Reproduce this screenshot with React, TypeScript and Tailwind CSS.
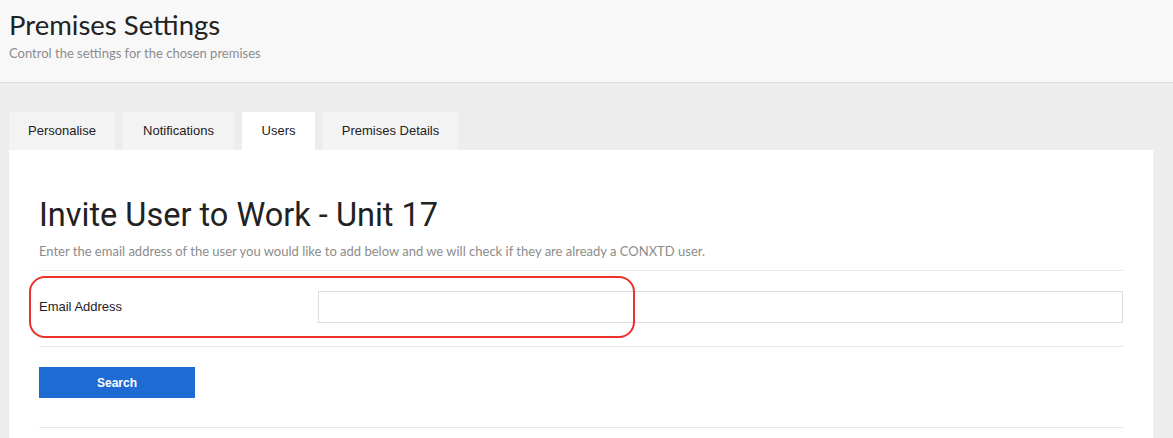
const TABS = [
  { label: 'Personalise', width: 'w-[106px]' },
  { label: 'Notifications', width: 'w-[111px]' },
  { label: 'Users', width: 'w-[73px]' },
  { label: 'Premises Details', width: 'w-[135px]' },
];

export default function App() {
  const active = 'Users';

  return (
    <div className="h-[438px] overflow-hidden bg-[#ededed] font-['Liberation_Sans',sans-serif]">
      {/* Page header */}
      <header className="h-[83px] bg-[#f8f8f8] border-b border-[#dcdcdc] px-[9px] pt-[7px]">
        <h1 className="font-['Lato',sans-serif] text-[27.5px] leading-[35px] text-[#222]">Premises Settings</h1>
        <p className="mt-[2px] font-['Lato',sans-serif] text-[13px] text-[#8c8c8c]">Control the settings for the chosen premises</p>
      </header>

      <div className="pl-[9px] pr-[20px] pt-[29px]">
        {/* Tabs */}
        <div className="flex gap-[8px]">
          {TABS.map((tab) => (
            <button
              key={tab.label}
              className={
                tab.label === active
                  ? `${tab.width} h-[38px] bg-white text-[13px] text-[#222]`
                  : `${tab.width} h-[38px] bg-[#f3f3f3] text-[13px] text-[#222]`
              }
            >
              {tab.label}
            </button>
          ))}
        </div>

        {/* Panel */}
        <div className="bg-white px-[30px] pt-[45px] pb-[40px]">
          <h2 className="font-['Roboto',sans-serif] font-normal text-[32.5px] leading-[40px] text-[#222]">Invite User to Work - Unit 17</h2>
          <p className="mt-[7px] font-['Lato',sans-serif] text-[13px] leading-[18px] text-[#8c8c8c]">
            Enter the email address of the user you would like to add below and we will check if they are already a CONXTD user.
          </p>

          <div className="mt-[10px] border-t border-[#e8e8e8]" />

          <div className="relative flex items-center pt-[20px] pb-[23px]">
            <label className="w-[279px] text-[13px] text-[#222]">Email Address</label>
            <input className="flex-1 h-[32px] border border-[#dedede] outline-none px-2 text-[13px]" />
            {/* annotation ring */}
            <div className="absolute left-[-10px] top-[5px] w-[606px] h-[62px] rounded-[16px] border-2 border-[#f0302a] pointer-events-none" />
          </div>

          <div className="border-t border-[#e8e8e8]" />

          <div className="pt-[20px] pb-[29px]">
            <button className="block w-[156px] h-[31px] bg-[#1f6bd4] text-white text-[12px] font-bold">Search</button>
          </div>

          <div className="border-t border-[#e8e8e8]" />
        </div>
      </div>
    </div>
  );
}
